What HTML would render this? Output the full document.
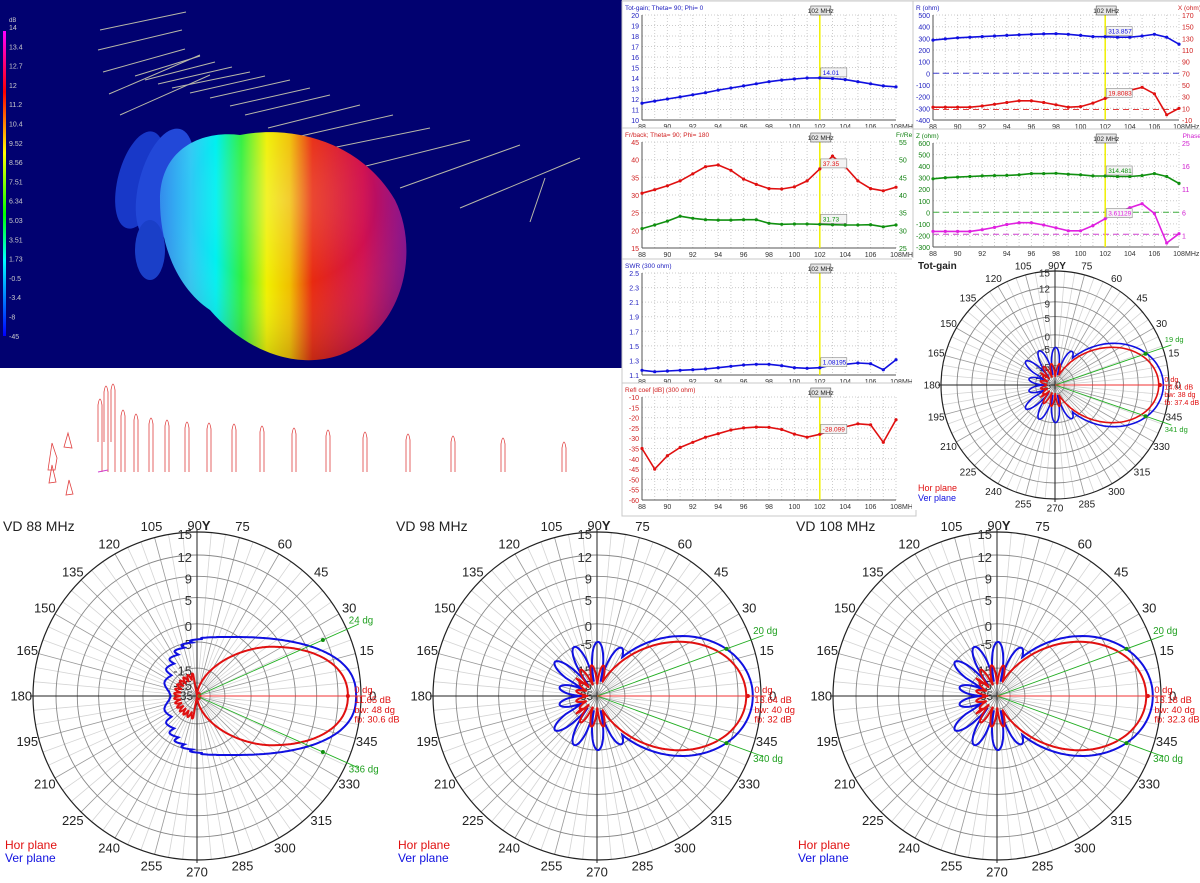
<!DOCTYPE html>
<html><head><meta charset="utf-8">
<style>
html,body{margin:0;padding:0;background:#fff;}
body{width:1200px;height:878px;overflow:hidden;font-family:"Liberation Sans",sans-serif;}
svg text{font-family:"Liberation Sans",sans-serif;}
</style></head>
<body>
<svg id="s" width="1200" height="878" viewBox="0 0 1200 878" xmlns="http://www.w3.org/2000/svg">
<defs>
<linearGradient id="lob" gradientUnits="userSpaceOnUse" x1="155" y1="0" x2="409" y2="0">
<stop offset="0" stop-color="#2a80f0"/>
<stop offset="0.14" stop-color="#30c8f5"/>
<stop offset="0.24" stop-color="#00f0f0"/>
<stop offset="0.34" stop-color="#30f040"/>
<stop offset="0.44" stop-color="#f0f000"/>
<stop offset="0.53" stop-color="#f0c000"/>
<stop offset="0.62" stop-color="#e82a10"/>
<stop offset="0.82" stop-color="#d01050"/>
<stop offset="1" stop-color="#800a90"/>
</linearGradient>
<linearGradient id="cb" x1="0" y1="0" x2="0" y2="1">
<stop offset="0" stop-color="#ff00ff"/><stop offset="0.2" stop-color="#ff0000"/>
<stop offset="0.4" stop-color="#ffff00"/><stop offset="0.6" stop-color="#00ff00"/>
<stop offset="0.75" stop-color="#00ffff"/><stop offset="1" stop-color="#0000ff"/>
</linearGradient>
<radialGradient id="sh" cx="0.5" cy="0.3" r="0.75">
<stop offset="0" stop-color="#fff" stop-opacity="0.2"/><stop offset="0.5" stop-color="#fff" stop-opacity="0"/>
<stop offset="1" stop-color="#000" stop-opacity="0.2"/></radialGradient>
</defs>
<rect x="0" y="0" width="622" height="368" fill="#010170"/>
<g id="three"></g>
<rect x="622" y="0" width="578" height="510" fill="#ececec"/>
<g id="charts"></g>
<g id="polars"></g>
</svg>
<script>
function f(n){return n.toFixed(1);}
(function(){
 var t='';
 t+='<rect x="3" y="31" width="3" height="305" fill="url(#cb)"/>';
 var lab=['14','13.4','12.7','12','11.2','10.4','9.52','8.56','7.51','6.34','5.03','3.51','1.73','-0.5','-3.4','-8','-45'];
 t+='<text x="9" y="22" font-size="6" fill="#ccc">dB</text>';
 for(var i=0;i<lab.length;i++){t+='<text x="9" y="'+f(30+i*19.3)+'" font-size="7" fill="#ccc">'+lab[i]+'</text>';}
 var L=[[100,30,186,12],[98,50,182,30],[103,72,185,49],[109,94,200,55],[120,115,210,75],[135,76,200,56],[145,80,215,62],[158,84,232,67],[172,88,250,72],[190,93,265,76],[210,98,290,80],[230,106,310,88],[245,115,330,95],[268,128,360,105],[292,138,393,115],[322,150,430,128],[358,168,470,140],[400,188,520,145],[460,208,580,158],[530,222,545,178]];
 for(var i=0;i<L.length;i++){var l=L[i];t+='<line x1="'+l[0]+'" y1="'+l[1]+'" x2="'+l[2]+'" y2="'+l[3]+'" stroke="#b8b8a8" stroke-width="1"/>';}
 t+='<ellipse cx="140" cy="180" rx="22" ry="50" fill="#1838c8" transform="rotate(15 140 180)"/>';
 t+='<ellipse cx="165" cy="185" rx="26" ry="58" fill="#2248d8" transform="rotate(15 165 185)"/>';
 t+='<ellipse cx="150" cy="250" rx="15" ry="30" fill="#1a3fc8"/>';
 var bp='M160 200 C160 150 200 130 240 135 C290 125 360 140 395 200 C420 250 405 330 340 355 C290 372 240 345 210 310 C180 290 160 250 160 200 Z';
 t+='<path d="'+bp+'" fill="url(#lob)"/><path d="'+bp+'" fill="url(#sh)"/>';
 var xs=[123,136,151,167,187,209,234,262,294,328,365,408,453,503,564];
 var hs=[408,412,416,418,420,421,422,424,426,428,430,432,434,436,440];
 for(var i=0;i<xs.length;i++){var x=xs[i],h=hs[i];t+='<path d="M'+(x-2)+' 472 L'+(x-2)+' '+(h+8)+' Q'+x+' '+(h-4)+' '+(x+2)+' '+(h+8)+' L'+(x+2)+' 472" fill="none" stroke="#e04040" stroke-width="0.8"/>';}
 [[100,397],[106,384],[113,382]].forEach(function(p){var x=p[0],h=p[1];t+='<path d="M'+(x-2)+' 442 L'+(x-2)+' '+(h+8)+' Q'+x+' '+(h-4)+' '+(x+2)+' '+(h+8)+' L'+(x+2)+' 472" fill="none" stroke="#e04040" stroke-width="0.8"/>';});
 t+='<path d="M48 470 L52 443 L57 458 L55 470 Z M64 447 L68 433 L72 448 Z M49 483 L52 465 L56 482 Z M66 495 L69 480 L73 494 Z" fill="none" stroke="#e04040" stroke-width="0.8"/>';
 t+='<line x1="98" y1="472" x2="108" y2="470" stroke="#d040d0" stroke-width="1"/>';
 document.getElementById('three').innerHTML=t;
})();
function chart(o){
 var t='';var x0=o.x0,x1=o.x1,y0=o.y0,y1=o.y1;
 t+='<rect x="'+(x0-20)+'" y="'+(y0-14)+'" width="'+(x1-x0+(o.rl?45:40))+'" height="'+(y1-y0+30)+'" fill="#fff" stroke="#c8c8c8"/>';
 var W=x1-x0,H=y1-y0;
 function X(i){return x0+W*i/20;}
 function Y(v){return y1-(v-o.ymin)/(o.ymax-o.ymin)*H;}
 for(var i=0;i<=20;i++){t+='<line x1="'+f(X(i))+'" y1="'+y0+'" x2="'+f(X(i))+'" y2="'+y1+'" stroke="#ccc" stroke-dasharray="1,2"/>';}
 for(var k=0;k<o.yl.length;k++){var yy=y0+H*k/(o.yl.length-1);t+='<line x1="'+x0+'" y1="'+f(yy)+'" x2="'+x1+'" y2="'+f(yy)+'" stroke="#ccc" stroke-dasharray="1,2"/>';
  t+='<text x="'+(x0-3)+'" y="'+f(yy+3)+'" font-size="7" fill="'+o.lc+'" text-anchor="end">'+o.yl[k]+'</text>';
  if(o.rl)t+='<text x="'+(x1+3)+'" y="'+f(yy+3)+'" font-size="7" fill="'+o.rc+'">'+o.rl[k]+'</text>';}
 t+='<line x1="'+x0+'" y1="'+y0+'" x2="'+x0+'" y2="'+y1+'" stroke="#555"/><line x1="'+x0+'" y1="'+y1+'" x2="'+x1+'" y2="'+y1+'" stroke="#555"/>';
 for(var i=0;i<=20;i+=2){t+='<text x="'+f(X(i))+'" y="'+(y1+9)+'" font-size="7" fill="#333" text-anchor="middle">'+(88+i)+'</text>';}
 t+='<text x="'+(x1+6)+'" y="'+(y1+9)+'" font-size="7" fill="#333">MHz</text>';
 (o.dash||[]).forEach(function(d){t+='<line x1="'+x0+'" y1="'+f(Y(d[0]))+'" x2="'+x1+'" y2="'+f(Y(d[0]))+'" stroke="'+d[1]+'" stroke-dasharray="6,4"/>';});
 t+='<line x1="'+f(X(14))+'" y1="'+y0+'" x2="'+f(X(14))+'" y2="'+y1+'" stroke="#f0f000" stroke-width="1.5"/>';
 t+='<rect x="'+f(X(14)-9)+'" y="'+(y0-9)+'" width="20" height="9" fill="#e8e8e8" stroke="#555" stroke-width="0.6"/><text x="'+f(X(14)+1)+'" y="'+(y0-2)+'" font-size="6.5" text-anchor="middle" fill="#222">102 MHz</text>';
 o.s.forEach(function(s){var p='';for(var i=0;i<21;i++){p+=(i?'L':'M')+f(X(i))+' '+f(Y(s.v[i]));}
  t+='<path d="'+p+'" fill="none" stroke="'+s.c+'" stroke-width="1.6"/>';
  for(var i=0;i<21;i++)t+='<circle cx="'+f(X(i))+'" cy="'+f(Y(s.v[i]))+'" r="1.6" fill="'+s.c+'"/>';
  if(s.l){t+='<rect x="'+f(X(14)+1)+'" y="'+f(Y(s.v[14])-10)+'" width="26" height="9" fill="#f4f4f4" stroke="#888" stroke-width="0.6"/><text x="'+f(X(14)+3)+'" y="'+f(Y(s.v[14])-3)+'" font-size="6.5" fill="'+s.c+'">'+s.l+'</text>';}});
 t+='<text x="'+(x0-17)+'" y="'+(y0-5)+'" font-size="6.5" fill="'+o.tc+'">'+o.title+'</text>';
 if(o.rt)t+='<text x="'+(x1+22)+'" y="'+(y0-5)+'" font-size="6.5" fill="'+o.rc+'" text-anchor="end">'+o.rt+'</text>';
 return t;
}
var C='';
C+=chart({x0:642,x1:896,y0:15,y1:120,ymin:10,ymax:20,yl:['20','19','18','17','16','15','14','13','12','11','10'],lc:'#2020c0',title:'Tot-gain; Theta= 90; Phi= 0',tc:'#2020c0',
 s:[{c:'#1010e0',l:'14.01',v:[11.6,11.8,12.0,12.2,12.4,12.6,12.85,13.05,13.25,13.45,13.65,13.8,13.9,14.0,14.01,13.95,13.85,13.65,13.45,13.25,13.15]}]});
C+=chart({x0:642,x1:896,y0:142,y1:248,ymin:15,ymax:45,yl:['45','40','35','30','25','20','15'],rl:['55','50','45','40','35','30','25'],lc:'#d02020',rc:'#108010',title:'Fr/back; Theta= 90; Phi= 180',tc:'#d02020',rt:'Fr/Rear',
 s:[{c:'#e01010',l:'37.35',v:[30.5,31.5,32.6,34,36,38,38.5,37,34.5,33,31.8,31.7,32.3,34,37.4,41,38,34,31.8,31.2,32.2]},
 {c:'#109010',l:'31.73',v:[20.5,21.5,22.6,24,23.4,23,22.9,22.9,23,23,22,21.7,21.8,21.8,21.7,21.6,21.5,21.5,21.6,21,21.5]}]});
C+=chart({x0:933,x1:1179,y0:15,y1:120,ymin:-400,ymax:500,yl:['500','400','300','200','100','0','-100','-200','-300','-400'],rl:['170','150','130','110','90','70','50','30','10','-10'],lc:'#2020c0',rc:'#d02020',title:'R (ohm)',tc:'#2020c0',rt:'X (ohm)',
 dash:[[0,'#4040d0'],[-310,'#e04040']],
 s:[{c:'#1010e0',l:'313.857',v:[285,295,305,310,315,320,325,330,335,338,340,335,325,315,314,310,310,320,335,310,250]},
 {c:'#e01010',l:'19.8083',v:[-290,-290,-290,-290,-280,-265,-250,-235,-235,-250,-270,-290,-285,-255,-215,-180,-145,-120,-175,-355,-300]}]});
C+=chart({x0:933,x1:1179,y0:143,y1:247,ymin:-300,ymax:600,yl:['600','500','400','300','200','100','0','-100','-200','-300'],rl:['25','','16','','11','','6','','1',''],lc:'#108010',rc:'#d020d0',title:'Z (ohm)',tc:'#108010',rt:'Phase',
 dash:[[0,'#40b040'],[-190,'#d040d0']],
 s:[{c:'#109010',l:'314.481',v:[290,300,305,310,315,318,320,325,335,335,338,330,325,315,314,310,310,318,335,310,250]},
 {c:'#e020e0',l:'3.61129',v:[-165,-165,-165,-165,-150,-130,-105,-90,-90,-110,-135,-160,-160,-115,-55,0,40,75,-10,-265,-185]}]});
C+=chart({x0:642,x1:896,y0:273,y1:375,ymin:0.97,ymax:2.5,yl:['2.5','2.3','2.1','1.9','1.7','1.5','1.3','1.1'],lc:'#2020c0',title:'SWR (300 ohm)',tc:'#2020c0',
 s:[{c:'#1010e0',l:'1.08195',v:[1.04,1.02,1.03,1.04,1.05,1.06,1.08,1.10,1.12,1.13,1.13,1.11,1.08,1.07,1.08,1.12,1.13,1.15,1.14,1.05,1.2]}]});
C+=chart({x0:642,x1:896,y0:397,y1:500,ymin:-60,ymax:-10,yl:['-10','-15','-20','-25','-30','-35','-40','-45','-50','-55','-60'],lc:'#d02020',title:'Refl coef [dB] (300 ohm)',tc:'#d02020',
 s:[{c:'#e01010',l:'-28.099',v:[-35,-45,-38.5,-34.5,-32,-29.5,-27.8,-26,-25,-24.6,-24.7,-25.8,-28,-29.5,-28.1,-26,-24.5,-23,-23.5,-32,-21]}]});
C+='<rect x="912" y="258" width="288" height="252" fill="#fff"/>';
document.getElementById('charts').innerHTML=C;
function polar(cx,cy,R,fs,type,info){
 var t='';var rings=[1,.86,.73,.6,.44,.33,.17,.08];var rl=['15','12','9','5','0','-5','-15','-25'];
 for(var a=0;a<360;a+=5){if(a%90==0)continue;var rr=a*Math.PI/180;var r0=a%15==0?0:R*0.08;
  t+='<line x1="'+f(cx+r0*Math.cos(rr))+'" y1="'+f(cy-r0*Math.sin(rr))+'" x2="'+f(cx+R*Math.cos(rr))+'" y2="'+f(cy-R*Math.sin(rr))+'" stroke="'+(a%15==0?'#999':'#d4d4d4')+'" stroke-width="0.8"/>';}
 for(var i=0;i<rings.length;i++)t+='<circle cx="'+cx+'" cy="'+cy+'" r="'+f(R*rings[i])+'" fill="none" stroke="'+(i==0?'#222':'#888')+'" stroke-width="'+(i==0?1.2:0.9)+'"/>';
 t+='<line x1="'+(cx-R-3)+'" y1="'+cy+'" x2="'+(cx+R+3)+'" y2="'+cy+'" stroke="#222"/><line x1="'+cx+'" y1="'+(cy-R-3)+'" x2="'+cx+'" y2="'+(cy+R+3)+'" stroke="#222"/>';
 for(var a=0;a<360;a+=15){if(a==90)continue;var rr=a*Math.PI/180;var d=R+fs*0.9;
  t+='<text x="'+f(cx+d*Math.cos(rr))+'" y="'+f(cy-d*Math.sin(rr)+fs*0.35)+'" font-size="'+fs+'" fill="#222" text-anchor="middle">'+a+'</text>';}
 t+='<text x="'+f(cx+2)+'" y="'+f(cy-R-2)+'" font-size="'+fs+'" fill="#222" text-anchor="middle">90<tspan font-weight="bold">Y</tspan></text>';
 for(var i=0;i<rl.length;i++)t+='<text x="'+f(cx-5)+'" y="'+f(cy-R*rings[i]+fs*0.55)+'" font-size="'+fs+'" fill="#333" text-anchor="end">'+rl[i]+'</text>';
 t+='<text x="'+f(cx-4)+'" y="'+f(cy+4)+'" font-size="'+(fs*0.9)+'" fill="#333" text-anchor="end">35</text>';
 var sw=(R>140?2:1.6);
 function pat(fn,col){var p='';for(var d=0;d<=360;d+=1){var th=d*Math.PI/180;var r=R*fn(d>180?d-360:d);p+=(d?'L':'M')+f(cx+r*Math.cos(th))+' '+f(cy-r*Math.sin(th));}
  t+='<path d="'+p+'Z" fill="none" stroke="'+col+'" stroke-width="'+sw+'"/>';}
 function sup(xc,axf,axb,ay,nf,nb,col,wig){var p='';for(var i=0;i<=360;i++){var th=i*Math.PI/180;var c=Math.cos(th),s=Math.sin(th);
   var n=c>=0?nf:nb;var ax=c>=0?axf:axb;
   var x=xc+ax*Math.sign(c)*Math.pow(Math.abs(c),2/n);var y=ay*Math.sign(s)*Math.pow(Math.abs(s),2/n);
   if(wig&&c<0){x-=wig*Math.abs(Math.sin(i*Math.PI/12));}
   p+=(i?'L':'M')+f(cx+R*x)+' '+f(cy-R*y);}
  t+='<path d="'+p+'Z" fill="none" stroke="'+col+'" stroke-width="'+sw+'"/>';}
 function cs(a){return Math.cos(a*Math.PI/180);}
 if(type==1){
  sup(0.2,0.77,0.36,0.36,2.4,3.0,'#1010e0',0.04);
  sup(0.45,0.47,0.45,0.3,2.2,1.8,'#e01010',0);
  pat(function(d){var a=Math.abs(d);if(a<100)return 0.02;return 0.1+0.04*Math.abs(Math.sin(a*Math.PI/12));},'#e01010');
 }else{
  pat(function(d){var a=Math.abs(d);var m=0.95*Math.pow(Math.max(cs(a),0),2);var b=0;if(a>50){b=0.09+0.24*Math.pow(Math.abs(Math.sin((a-50)*Math.PI/26)),0.8)*(a>150?0.6:1);}return Math.max(m,b);},'#1010e0');
  pat(function(d){var a=Math.abs(d);var m=0.91*Math.pow(Math.max(cs(a),0),2.3);var b=0;if(a>45){b=0.07+0.12*Math.pow(Math.abs(Math.sin((a-45)*Math.PI/22)),1.2)*(a>140?0.5:1);}return Math.max(m,b);},'#e01010');
 }
 var g=info.bw*Math.PI/180;
 [g,-g].forEach(function(gg,k){var r2=R*1.08;t+='<line x1="'+cx+'" y1="'+cy+'" x2="'+f(cx+r2*Math.cos(gg))+'" y2="'+f(cy-r2*Math.sin(gg))+'" stroke="#20b020" stroke-width="0.9"/>';
  var mr=R*0.84;t+='<circle cx="'+f(cx+mr*Math.cos(gg))+'" cy="'+f(cy-mr*Math.sin(gg))+'" r="2" fill="#109010"/>';
  t+='<text x="'+f(cx+R*1.0*Math.cos(gg)+2)+'" y="'+f(cy-R*1.0*Math.sin(gg)+(k?10:-6))+'" font-size="'+(fs*0.75)+'" fill="#20a020">'+info.g[k]+'</text>';});
 t+='<line x1="'+cx+'" y1="'+cy+'" x2="'+f(cx+R*1.03)+'" y2="'+cy+'" stroke="#f03030" stroke-width="0.9"/><circle cx="'+f(cx+R*0.92)+'" cy="'+cy+'" r="2" fill="#e01010"/>';
 var ty=cy-3,tx=cx+R*0.96;
 info.t.forEach(function(s,i){t+='<text x="'+f(tx)+'" y="'+f(ty+i*fs*0.76)+'" font-size="'+(fs*0.72)+'" fill="#e01010">'+s+'</text>';});
 return t;
}
var P='';
P+=polar(1055,385,114,10,2,{bw:19,g:['19 dg','341 dg'],t:['0 dg','14.01 dB','bw: 38 dg','fb: 37.4 dB']});
P+='<text x="918" y="269" font-size="10" font-weight="bold" fill="#222">Tot-gain</text><text x="918" y="491" font-size="9" fill="#e01010">Hor plane</text><text x="918" y="501" font-size="9" fill="#1010e0">Ver plane</text>';
P+=polar(197,696,164,13,1,{bw:24,g:['24 dg','336 dg'],t:['0 dg','11.65 dB','bw: 48 dg','fb: 30.6 dB']});
P+=polar(597,696,164,13,2,{bw:20,g:['20 dg','340 dg'],t:['0 dg','13.64 dB','bw: 40 dg','fb: 32 dB']});
P+=polar(997,696,164,13,2,{bw:20,g:['20 dg','340 dg'],t:['0 dg','13.18 dB','bw: 40 dg','fb: 32.3 dB']});
[[3,'VD 88 MHz'],[396,'VD 98 MHz'],[796,'VD 108 MHz']].forEach(function(v){P+='<text x="'+v[0]+'" y="531" font-size="14" fill="#222">'+v[1]+'</text><text x="'+(v[0]+2)+'" y="849" font-size="12" fill="#e01010">Hor plane</text><text x="'+(v[0]+2)+'" y="862" font-size="12" fill="#1010e0">Ver plane</text>';});
document.getElementById('polars').innerHTML=P;
</script>
</body></html>
